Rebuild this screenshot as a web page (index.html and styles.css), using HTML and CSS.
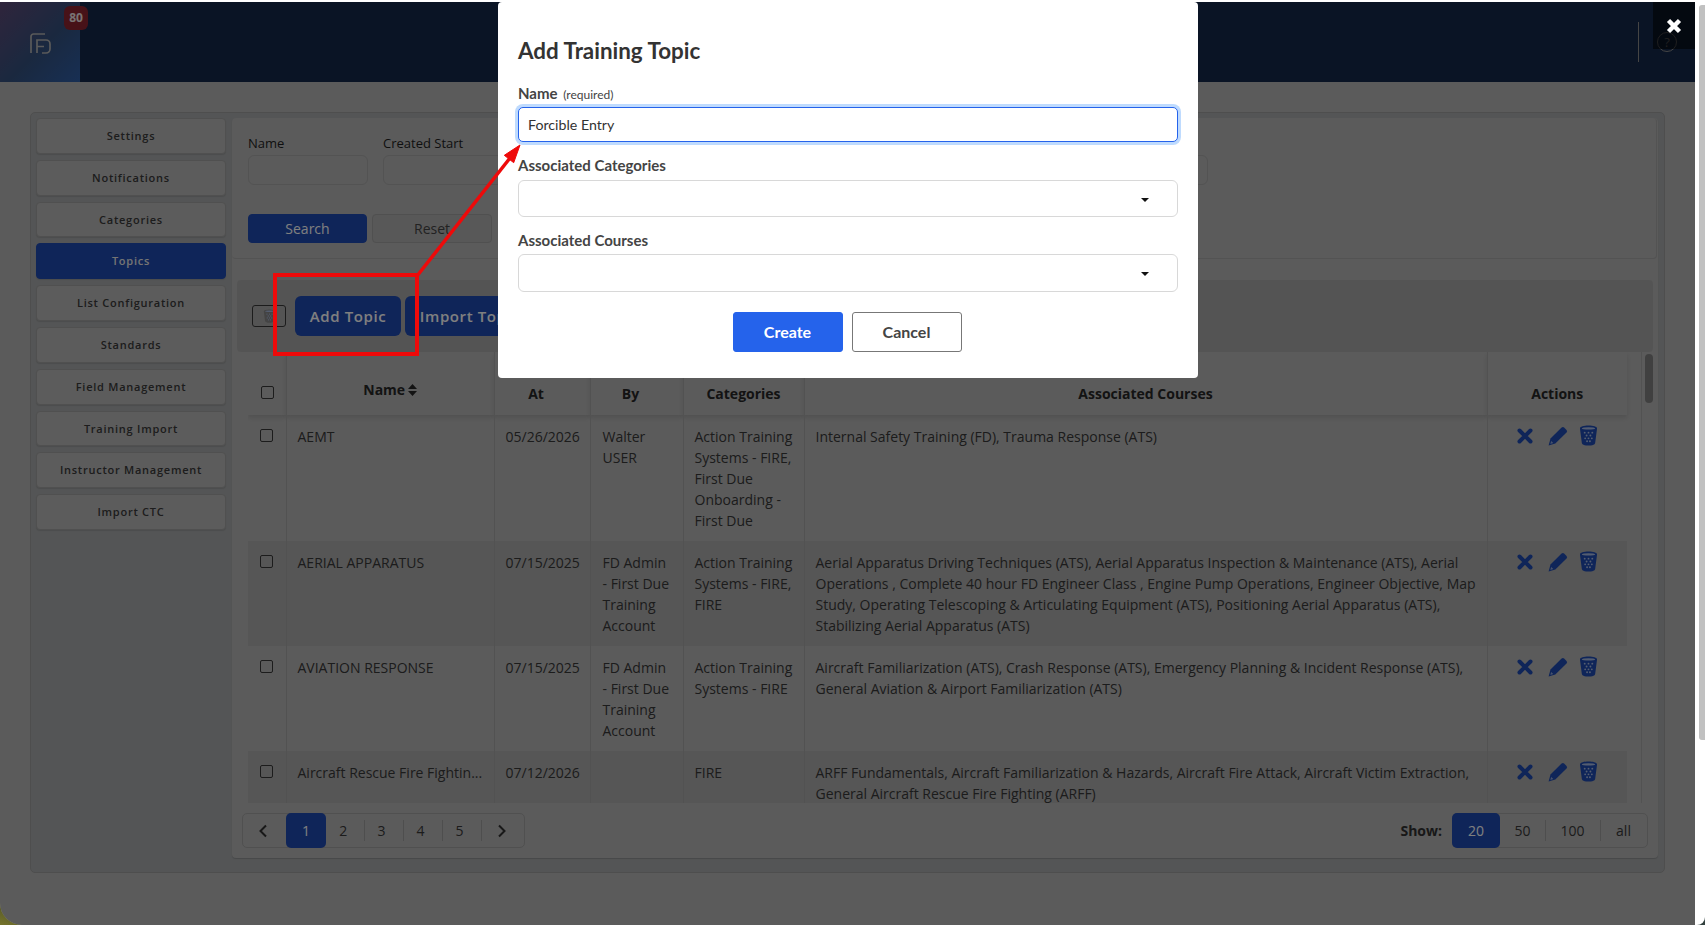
FILE: index.html
```html
<!DOCTYPE html>
<html lang="en">
<head>
<meta charset="utf-8">
<title>Training Topics</title>
<link rel="stylesheet" href="styles.css">
</head>
<body>
<div class="window">
  <div class="app">
    <header class="topbar">
      <div class="brand">
        <svg class="brand-logo" viewBox="0 0 22 22" fill="none" stroke="currentColor" stroke-width="1.700">
          <path d="M1 20V3.500A2.500 2.500 0 0 1 3.500 1H15"/>
          <path d="M7 20V7h9a4 4 0 0 1 4 4v5a4 4 0 0 1-4 4h-4"/>
          <path d="M7 13.500h7"/>
        </svg>
        <span class="badge">80</span>
      </div>
      <div class="topbar-tools">
        <span class="tool-divider"></span>
        <span class="help">?</span>
      </div>
    </header>

    <main class="page">
      <section class="panel">
        <nav class="sidebar">
          <a class="side-item">Settings</a>
          <a class="side-item">Notifications</a>
          <a class="side-item">Categories</a>
          <a class="side-item active">Topics</a>
          <a class="side-item">List Configuration</a>
          <a class="side-item">Standards</a>
          <a class="side-item">Field Management</a>
          <a class="side-item">Training Import</a>
          <a class="side-item">Instructor Management</a>
          <a class="side-item">Import CTC</a>
        </nav>

        <div class="content">
          <form class="filters">
            <div class="filter-row">
              <label class="field"><span>Name</span><i class="fake-input"></i></label>
              <label class="field"><span>Created Start</span><i class="fake-input"></i></label>
              <label class="field"><span>Created End</span><i class="fake-input"></i></label>
              <label class="field"><span>Updated Start</span><i class="fake-input"></i></label>
              <label class="field"><span>Updated End</span><i class="fake-input"></i></label>
              <label class="field"><span>Category</span><i class="fake-input"></i></label>
              <label class="field wide"><span>Course</span><i class="fake-input"></i></label>
            </div>
            <div class="filter-actions">
              <button type="button" class="btn-search">Search</button>
              <button type="button" class="btn-reset">Reset</button>
            </div>
          </form>

          <div class="toolbar">
            <button type="button" class="btn-trash">
              <svg viewBox="0 0 20 22"><use href="#trash"/></svg>
            </button>
            <button type="button" class="btn-add">Add Topic</button>
            <button type="button" class="btn-add btn-import">Import Topics</button>
          </div>

          <div class="table-area">
            <div class="table-clip">
              <table class="topics">
                <colgroup>
                  <col class="c-check"><col class="c-name"><col class="c-at"><col class="c-by"><col class="c-cat"><col class="c-courses"><col class="c-actions">
                </colgroup>
                <thead>
                  <tr>
                    <th class="th-check"><input type="checkbox" class="check"></th>
                    <th class="th-name">Name
                      <svg class="sort" viewBox="0 0 9 12"><path d="M4.500 0 9 5H0zM4.500 12 0 7h9z"/></svg>
                    </th>
                    <th class="th-off">Created<br>At</th>
                    <th class="th-off">Created<br>By</th>
                    <th>Associated<br>Categories</th>
                    <th>Associated Courses</th>
                    <th>Actions</th>
                  </tr>
                </thead>
                <tbody>
                  <tr>
                    <td><input type="checkbox" class="check"></td>
                    <td>AEMT</td>
                    <td>05/26/2026</td>
                    <td>Walter USER</td>
                    <td>Action Training Systems - FIRE, First Due Onboarding - First Due</td>
                    <td>Internal Safety Training (FD), Trauma Response (ATS)</td>
                    <td><div class="actions"><svg class="a-x" viewBox="0 0 16 16"><use href="#x"/></svg><svg class="a-pen" viewBox="0 0 20 20"><use href="#pen"/></svg><svg class="a-bin" viewBox="0 0 20 22"><use href="#trash"/></svg></div></td>
                  </tr>
                  <tr>
                    <td><input type="checkbox" class="check"></td>
                    <td>AERIAL APPARATUS</td>
                    <td>07/15/2025</td>
                    <td>FD Admin<br>- First Due Training Account</td>
                    <td>Action Training Systems - FIRE, FIRE</td>
                    <td>Aerial Apparatus Driving Techniques (ATS), Aerial Apparatus Inspection &amp; Maintenance (ATS), Aerial Operations , Complete 40 hour FD Engineer Class , Engine Pump Operations, Engineer Objective, Map Study, Operating Telescoping &amp; Articulating Equipment (ATS), Positioning Aerial Apparatus (ATS), Stabilizing Aerial Apparatus (ATS)</td>
                    <td><div class="actions"><svg class="a-x" viewBox="0 0 16 16"><use href="#x"/></svg><svg class="a-pen" viewBox="0 0 20 20"><use href="#pen"/></svg><svg class="a-bin" viewBox="0 0 20 22"><use href="#trash"/></svg></div></td>
                  </tr>
                  <tr>
                    <td><input type="checkbox" class="check"></td>
                    <td>AVIATION RESPONSE</td>
                    <td>07/15/2025</td>
                    <td>FD Admin<br>- First Due Training Account</td>
                    <td>Action Training Systems - FIRE</td>
                    <td>Aircraft Familiarization (ATS), Crash Response (ATS), Emergency Planning &amp; Incident Response (ATS), General Aviation &amp; Airport Familiarization (ATS)</td>
                    <td><div class="actions"><svg class="a-x" viewBox="0 0 16 16"><use href="#x"/></svg><svg class="a-pen" viewBox="0 0 20 20"><use href="#pen"/></svg><svg class="a-bin" viewBox="0 0 20 22"><use href="#trash"/></svg></div></td>
                  </tr>
                  <tr>
                    <td><input type="checkbox" class="check"></td>
                    <td class="nowrap">Aircraft Rescue Fire Fightin...</td>
                    <td>07/12/2026</td>
                    <td></td>
                    <td>FIRE</td>
                    <td>ARFF Fundamentals, Aircraft Familiarization &amp; Hazards, Aircraft Fire Attack, Aircraft Victim Extraction, General Aircraft Rescue Fire Fighting (ARFF)</td>
                    <td><div class="actions"><svg class="a-x" viewBox="0 0 16 16"><use href="#x"/></svg><svg class="a-pen" viewBox="0 0 20 20"><use href="#pen"/></svg><svg class="a-bin" viewBox="0 0 20 22"><use href="#trash"/></svg></div></td>
                  </tr>
                </tbody>
              </table>
            </div>
            <div class="table-scroll"><span class="table-thumb"></span></div>
          </div>

          <div class="pager-row">
            <div class="pager">
              <a class="pg pg-prev"><svg viewBox="0 0 10 14"><path d="M8 1.500 2.500 7 8 12.500"/></svg></a>
              <a class="pg current">1</a>
              <a class="pg pg-two">2</a>
              <a class="pg sep">3</a>
              <a class="pg sep">4</a>
              <a class="pg sep">5</a>
              <a class="pg sep pg-next"><svg viewBox="0 0 10 14"><path d="M2 1.500 7.500 7 2 12.500"/></svg></a>
            </div>
            <div class="show">
              <strong>Show:</strong>
              <div class="show-group">
                <a class="sz sz-20 current">20</a>
                <a class="sz sz-50">50</a>
                <a class="sz sz-100 sep">100</a>
                <a class="sz sz-all sep">all</a>
              </div>
            </div>
          </div>
        </div>
      </section>
    </main>

    <div class="scrim"></div>

    <button type="button" class="scrim-close" aria-label="Close">
      <svg viewBox="0 0 16 16"><path d="M2.500 2.500 13.500 13.500M13.500 2.500 2.500 13.500"/></svg>
    </button>

    <div class="modal" role="dialog">
      <h2 class="modal-title">Add Training Topic</h2>
      <div class="m-field m-first">
        <label class="m-label">Name <small>(required)</small></label>
        <input class="m-input" type="text" value="Forcible Entry">
      </div>
      <div class="m-field m-second">
        <label class="m-label">Associated Categories</label>
        <div class="m-select"><span class="m-caret"></span></div>
      </div>
      <div class="m-field m-third">
        <label class="m-label">Associated Courses</label>
        <div class="m-select m-select-tall"><span class="m-caret"></span></div>
      </div>
      <div class="m-actions">
        <button type="button" class="m-create">Create</button>
        <button type="button" class="m-cancel">Cancel</button>
      </div>
    </div>

    <div class="note-box"></div>
    <svg class="note-arrow" viewBox="0 0 110 140" fill="none">
      <path d="M3 135 96 17" stroke="#ee0a0a" stroke-width="3.500"/>
      <path d="M106 4 99.700 21.700 90.300 14.300z" fill="#ee0a0a" stroke="#ee0a0a" stroke-width="1"/>
    </svg>
  </div>

  <div class="page-scroll"><span class="page-thumb"></span></div>
</div>

<svg class="defs" aria-hidden="true">
  <defs>
    <g id="x"><path d="M2.500 2.500 13.500 13.500M13.500 2.500 2.500 13.500" fill="none" stroke="currentColor" stroke-width="4" stroke-linecap="round"/></g>
    <g id="pen">
      <path d="M13.600 1.500a1.800 1.800 0 0 1 2.500 0l2.400 2.400a1.800 1.800 0 0 1 0 2.500L7.300 17.600 .6 19.600 2.500 12.600z" fill="currentColor"/>
      <path d="M2.300 17.900 3.200 14.900 5.300 17z" fill="#8fa6da"/>
    </g>
    <g id="trash">
      <path d="M1 3.500C1 1.700 5 .6 10 .6s9 1.100 9 2.900l-2 15.300c-.2 1.800-3.300 2.800-7 2.800s-6.800-1-7-2.800z" fill="currentColor"/>
      <ellipse cx="10" cy="3.500" rx="7" ry="1.300" fill="#a9bbe0"/>
      <g fill="#a9bbe0"><circle cx="6" cy="8" r="1"/><circle cx="10" cy="8" r="1"/><circle cx="14" cy="8" r="1"/><circle cx="8" cy="11" r="1"/><circle cx="12" cy="11" r="1"/><circle cx="6.500" cy="14" r="1"/><circle cx="10" cy="14" r="1"/><circle cx="13.500" cy="14" r="1"/><circle cx="8.500" cy="17" r="1"/><circle cx="11.500" cy="17" r="1"/></g>
    </g>
  </defs>
</svg>
</body>
</html>
```

FILE: styles.css
```css
* { box-sizing: border-box; }
html, body { margin: 0; height: 100%; overflow: hidden; }
body {
  width: 1705px;
  height: 925px;
  background: #ffffff;
  padding-top: 2px;
  font-family: "Open Sans", "Liberation Sans", sans-serif;
  font-size: 14px;
  color: #383838;
}
a { display: block; text-decoration: none; color: inherit; }
button { font-family: inherit; cursor: pointer; }
.defs { width: 0; height: 0; position: absolute; }

.window {
  display: flex;
  height: 923px;
  background: linear-gradient(20deg, #76742c 0, #3c4222 2.5%, #24406a 97%, #24406a 100%);
}

/* application layer */
.app {
  position: relative;
  width: 1695px;
  height: 923px;
  overflow: hidden;
  border-bottom-left-radius: 22px;
  background: #b6b6b6;
}
.topbar {
  height: 80px;
  background: #14284a;
  display: flex;
  justify-content: space-between;
}
.brand {
  position: relative;
  width: 80px;
  background: linear-gradient(135deg, #5f4a78 0%, #34517f 55%, #2f5fa8 100%);
  color: #b4b4b4;
}
.brand-logo { position: absolute; left: 30px; top: 31px; width: 22px; height: 22px; }
.badge {
  position: absolute;
  left: 64px;
  top: 4px;
  width: 24px;
  height: 24px;
  border-radius: 6px;
  background: #8f2430;
  color: #f2e6e6;
  font-size: 12px;
  font-weight: 700;
  line-height: 24px;
  text-align: center;
}
.topbar-tools { display: flex; align-items: center; padding-right: 18px; }
.tool-divider { width: 1px; height: 40px; background: #8a8a8a; }
.help {
  margin-left: 18px;
  width: 20px;
  height: 20px;
  border: 1px solid #8a8a8a;
  border-radius: 50%;
  color: #8a8a8a;
  font-size: 13px;
  line-height: 18px;
  text-align: center;
}

.page { padding: 30px 30px 0 30px; }
.panel {
  display: flex;
  gap: 6px;
  width: 1635px;
  height: 761px;
  padding: 5px 6px 14px 5px;
  background: #a8aaac;
  border: 1px solid #9c9c9c;
  border-radius: 5px;
}

/* sidebar */
.sidebar { width: 190px; flex: none; display: flex; flex-direction: column; gap: 6px; }
.side-item {
  height: 35.8px;
  line-height: 34px;
  text-align: center;
  font-size: 11px;
  font-weight: 600;
  letter-spacing: .75px;
  color: #3a3a3a;
  background: #b8b8b8;
  border: 1px solid #a0a0a0;
  border-radius: 4px;
  box-shadow: 0 1px 1px rgba(0,0,0,.1);
}
.side-item.active { background: #1e4ab2; border-color: #1e4ab2; color: #e8e8e8; }

/* main column */
.content {
  flex: 1;
  min-width: 0;
  display: flex;
  flex-direction: column;
  background: #b6b6b6;
  border-radius: 4px;
  box-shadow: 0 1px 1px rgba(0,0,0,.15);
}
.filters {
  height: 141px;
  padding: 14px 16px 0;
  border: 1px solid #a6a6a6;
  border-top: 0;
  border-left: 0;
  border-radius: 4px;
  margin-right: 1px;
}
.filter-row { display: flex; gap: 15px; }
.field { display: flex; flex-direction: column; width: 120px; }
.field.wide { width: 150px; }
.field span { font-size: 13px; line-height: 23px; color: #1e1e1e; white-space: nowrap; }
.fake-input {
  display: block;
  height: 30px;
  border: 1px solid #a6a6a6;
  border-radius: 6px;
}
.filter-actions { display: flex; gap: 5px; margin-top: 29px; }
.btn-search, .btn-reset {
  width: 120px;
  height: 29px;
  font-size: 14px;
  border-radius: 4px;
  padding: 0;
}
.btn-search { width: 119px; background: #1e4ab2; border: 1px solid #1e4ab2; color: #fff; }
.btn-reset { background: #b0b0b0; border: 1px solid #a0a0a0; color: #444; }

.toolbar {
  margin: 21px 5px 0;
  height: 72px;
  padding-left: 15px;
  display: flex;
  align-items: center;
  background: #a9a9a9;
  border-radius: 4px;
}
.btn-trash {
  width: 34px;
  height: 22px;
  padding: 0;
  display: flex;
  align-items: center;
  justify-content: center;
  background: transparent;
  border: 1px solid #383838;
  border-radius: 3px;
  color: #888;
}
.btn-trash svg { width: 13px; height: 14px; }
.btn-add {
  margin-left: 9px;
  width: 106px;
  height: 40px;
  padding: 0;
  background: #1e4ab2;
  border: 0;
  border-radius: 6px;
  color: #fff;
  font-size: 15px;
  font-weight: 600;
  letter-spacing: .6px;
  white-space: nowrap;
}
.btn-import { margin-left: 4px; width: 137px; }

/* table */
.table-area {
  display: flex;
  height: 451px;
  margin-left: 16px;
}
.table-clip {
  width: 1396px;
  height: 451px;
  overflow: hidden;
  border-right: 1px solid #a4a4a4;
  padding-right: 15px;
}
.topics {
  width: 1379px;
  table-layout: fixed;
  border-collapse: collapse;
  line-height: 21px;
  color: #383838;
}
.c-check { width: 38px; }
.c-name { width: 208px; }
.c-at { width: 96px; }
.c-by { width: 93px; }
.c-cat { width: 121px; }
.c-courses { width: 683px; }
.c-actions { width: 140px; }

.topics th {
  height: 63px;
  padding: 0 8px 11px;
  vertical-align: bottom;
  text-align: center;
  font-weight: 700;
  font-size: 14px;
  color: #262626;
  background: #b6b6b6;
  border-left: 1px solid #a4a4a4;
  box-shadow: 0 3px 4px rgba(0,0,0,.1);
}
.topics th.th-check { border-left: 0; padding: 0 0 16px 13px; }
.topics th.th-name { padding-bottom: 15px; }
.topics th.th-off { padding-right: 20px; }
.sort { width: 9px; height: 12px; fill: #262626; margin-left: -1px; vertical-align: -1px; }
.topics td {
  padding: 10.5px 9px 10.5px 11px;
  vertical-align: top;
  border-left: 1px solid #a4a4a4;
}
.topics td:first-child { border-left: 0; padding: 14px 0 0 12px; }
.topics td:nth-child(4) { padding-left: 12px; }
.topics td.nowrap { white-space: nowrap; }
.topics tbody tr:nth-child(even) td { background: #acacac; }
.check {
  appearance: none;
  display: block;
  width: 13px;
  height: 13px;
  margin: 0;
  background: transparent;
  border: 1px solid #383838;
  border-radius: 2px;
}
.actions { display: flex; align-items: center; height: 20px; padding-left: 18px; color: #1e4ab2; }
.a-x { width: 16px; height: 16px; }
.a-pen { width: 20px; height: 20px; margin-left: 15px; }
.a-bin { width: 19px; height: 21px; margin-left: 11px; }

.table-scroll { position: relative; width: 16px; }
.table-thumb {
  position: absolute;
  left: 3px;
  top: 2px;
  width: 8px;
  height: 49px;
  border-radius: 4px;
  background: #808080;
}

/* pager */
.pager-row {
  display: flex;
  justify-content: space-between;
  padding: 10px 10px 0;
}
.pager, .show-group {
  display: flex;
  height: 35px;
  border: 1px solid #a0a0a0;
  border-radius: 5px;
  line-height: 33px;
  font-size: 14px;
  text-align: center;
  color: #383838;
}
.pg { width: 39px; position: relative; padding-right: 3px; }
.pg-prev { width: 43px; padding-right: 3px; }
.pg-two { width: 37.5px; }
.pg-next { width: 43px; padding-right: 0; }
.pg svg { width: 10px; height: 14px; fill: none; stroke: #303030; stroke-width: 2; vertical-align: -2px; }
.sep::before {
  content: "";
  position: absolute;
  left: 0;
  top: 6px;
  bottom: 6px;
  width: 1px;
  background: #9c9c9c;
}
.pager .current, .show-group .current {
  margin: -1px 0;
  height: 35px;
  line-height: 35px;
  background: #1e4ab2;
  color: #fff;
  border-radius: 5px;
}
.pg.current { width: 40px; padding-right: 0; }
.show { display: flex; align-items: center; gap: 10px; }
.show strong { font-weight: 700; font-size: 14px; color: #303030; }
.sz { position: relative; }
.sz-20 { width: 48px; }
.show-group .current { margin-left: -1px; }
.sz-50 { width: 45px; }
.sz-100 { width: 55px; }
.sz-all { width: 47px; }

/* page scrollbar, left outside the modal's backdrop */
.page-scroll { width: 10px; background: #fff; position: relative; border-bottom-right-radius: 8px; }
.page-thumb {
  position: absolute;
  left: 4px;
  top: 3px;
  width: 6px;
  height: 735px;
  background: #c1c1c1;
  border-radius: 3px 0 0 3px;
}

/* modal layer */
.scrim { position: absolute; inset: 0; background: rgba(0,0,0,.5); }
.scrim-close {
  position: absolute;
  right: 0;
  top: 0;
  width: 42px;
  height: 47px;
  padding: 0;
  border: 0;
  background: rgba(0,0,0,.55);
  display: flex;
  align-items: center;
  justify-content: center;
}
.scrim-close svg { width: 16px; height: 16px; fill: none; stroke: #fff; stroke-width: 4.500; }

.modal {
  position: absolute;
  left: 498px;
  top: 0;
  width: 700px;
  height: 376px;
  padding: 0 20px;
  background: #fff;
  border-radius: 4px;
  font-family: Lato, "Liberation Sans", sans-serif;
  color: #333;
}
.modal-title { margin: 0; padding-top: 35px; font-size: 22.4px; line-height: 28px; font-weight: 700; color: #333; height: 80.5px; }
.m-label { display: block; font-size: 15px; line-height: 20px; font-weight: 700; color: #444; }
.m-label small { font-size: 12px; font-weight: 400; margin-left: 2px; }
.m-input {
  display: block;
  width: 100%;
  height: 35px;
  margin-top: 2.500px;
  padding: 0 9px;
  border: 1px solid #2563eb;
  border-radius: 5px;
  box-shadow: 0 0 0 3px #bfdbfe;
  outline: 0;
  font-family: inherit;
  font-size: 14.2px;
  color: #333;
}
.m-field { margin: 0; }
.m-second { margin-top: 12.7px; }
.m-third { margin-top: 13px; }
.m-select {
  position: relative;
  height: 37px;
  margin-top: 5px;
  border: 1px solid #d8d8d8;
  border-radius: 6px;
}
.m-select-tall { height: 38px; margin-top: 4px; }
.m-caret {
  position: absolute;
  right: 28px;
  top: 17px;
  border-left: 4px solid transparent;
  border-right: 4px solid transparent;
  border-top: 4px solid #111;
}
.m-actions { display: flex; justify-content: center; gap: 9px; margin-top: 20px; padding-right: 2px; }
.m-create, .m-cancel {
  width: 110px;
  height: 40px;
  padding: 0;
  border-radius: 3px;
  font-family: inherit;
  font-size: 16px;
  font-weight: 700;
}
.m-create { background: #2563eb; border: 1px solid #2563eb; color: #fff; }
.m-cancel { background: #fff; border: 1px solid #777; color: #444; }

/* red screenshot annotation */
.note-box {
  position: absolute;
  left: 273px;
  top: 271px;
  width: 146px;
  height: 83px;
  border: 4px solid #ee0a0a;
}
.note-arrow {
  position: absolute;
  left: 414px;
  top: 139px;
  width: 110px;
  height: 140px;
}
```
